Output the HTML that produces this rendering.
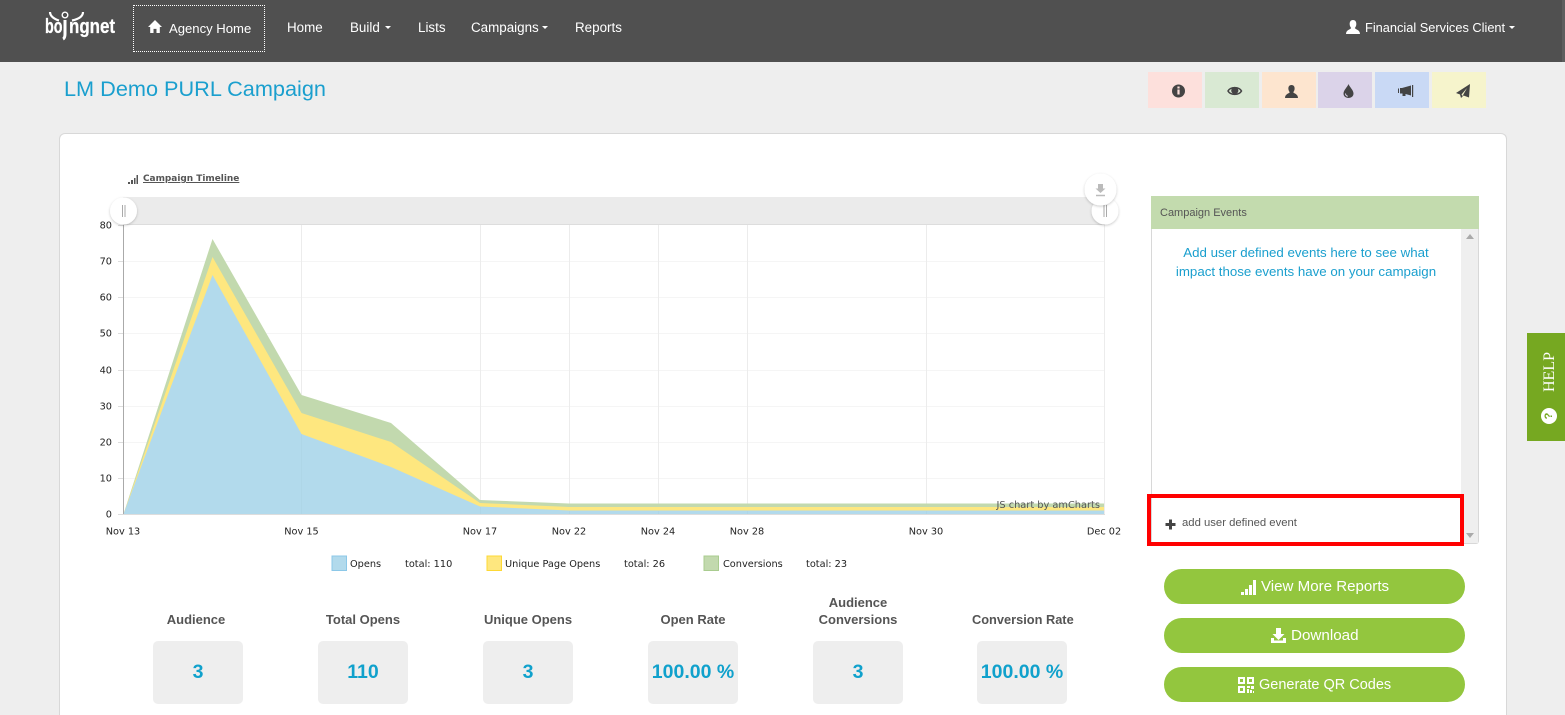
<!DOCTYPE html>
<html lang="en"><head><meta charset="utf-8"><title>LM Demo PURL Campaign</title>
<style>
html,body{margin:0;padding:0;width:1565px;height:715px;overflow:hidden;background:#eee;font-family:"Liberation Sans",sans-serif}
#p{position:relative;width:1565px;height:715px;overflow:hidden;background:#eee}
.a{position:absolute;white-space:nowrap}
.nav{color:#fff;font-size:13.4px;line-height:18px;top:19px}
.caret{position:absolute;width:0;height:0;border-left:3px solid transparent;border-right:3px solid transparent;border-top:3px solid #fff;top:26px}
.tile{position:absolute;top:72px;height:36px;width:54px}
.tile svg{position:absolute}
.lab{position:absolute;text-align:center;font-weight:700;font-size:13px;line-height:17px;color:#555;white-space:nowrap}
.stat{position:absolute;top:641px;width:90px;height:63px;background:#eee;border-radius:5px;text-align:center;font-weight:700;font-size:19.5px;line-height:62px;color:#10a1cc;white-space:nowrap}
.btn{position:absolute;left:1164px;width:301px;height:35px;border-radius:18px;background:#93c63e;color:#fff;line-height:38px}
.btn svg{position:absolute}
.btn span{position:absolute;white-space:nowrap;top:-1px;line-height:38px}
</style></head><body><div id="p">
<div class="a" style="left:0;top:0;width:1565px;height:62px;background:#505050"></div>
<div class="a" style="left:1562px;top:0;width:3px;height:62px;background:#5e5e5e"></div>

<!-- logo -->
<svg class="a" style="left:40px;top:8px" width="85" height="34" viewBox="0 0 85 34"><path d="M10 4C10 8 14 11 19 12.500M43 4C43 8 39 11 32 12.500" fill="none" stroke="#fff" stroke-width="2.200"/><circle cx="25" cy="7" r="2.800" fill="none" stroke="#fff" stroke-width="1.400"/><path d="M25 12V26Q25 30 23 31" fill="none" stroke="#fff" stroke-width="3"/><text x="5" y="25" font-family="Liberation Sans" font-weight="700" font-size="20" fill="#fff" stroke="#fff" stroke-width=".3" textLength="17.500" lengthAdjust="spacingAndGlyphs">bo</text><text x="29" y="25" font-family="Liberation Sans" font-weight="700" font-size="20" fill="#fff" stroke="#fff" stroke-width=".3" textLength="46" lengthAdjust="spacingAndGlyphs">ngnet</text></svg>

<div class="a" style="left:133px;top:5px;width:130px;height:45px;border:1px dotted #fff"></div>
<svg class="a" style="left:148px;top:20px" width="14" height="13" viewBox="0 0 16 14" preserveAspectRatio="none"><path d="M8 0L16 7.500H13.500V14H9.700V9.500H6.300V14H2.500V7.500H0Z" fill="#fff"/></svg>
<div class="a nav" style="left:169px;top:20px;font-size:13.1px">Agency Home</div>
<div class="a nav" style="left:287px">Home</div>
<div class="a nav" style="left:350px">Build</div><div class="caret" style="left:385px"></div>
<div class="a nav" style="left:418px">Lists</div>
<div class="a nav" style="left:471px">Campaigns</div><div class="caret" style="left:542px"></div>
<div class="a nav" style="left:575px">Reports</div>
<svg class="a" style="left:1346px;top:20px" width="14" height="14" viewBox="0 0 14 14"><path d="M7 0C9.500 0 10.500 2 10.300 4.500C10.200 6 9.500 7.300 8.800 8C9.500 9.500 14 9.800 14 14H0C0 9.800 4.500 9.500 5.200 8C4.500 7.300 3.800 6 3.700 4.500C3.500 2 4.500 0 7 0Z" fill="#fff"/></svg>
<div class="a nav" style="left:1365px;font-size:12.8px">Financial Services Client</div><div class="caret" style="left:1509px"></div>

<div class="a" style="left:64px;top:74px;font-size:21.7px;line-height:30px;color:#1a9fce">LM Demo PURL Campaign</div>

<div class="tile" style="left:1148px;background:#fde0dc"><svg style="left:20px;top:9px" width="20" height="20" viewBox="0 0 20 20"><circle cx="10.500" cy="10" r="6.500" fill="#444"/><rect x="9.400" y="8.500" width="2.200" height="5" fill="#fde0dc"/><rect x="9.400" y="5.500" width="2.200" height="2" fill="#fde0dc"/></svg></div>
<div class="tile" style="left:1205px;background:#d9e9d3"><svg style="left:20px;top:9px" width="20" height="20" viewBox="0 0 20 20"><path d="M3 10C5.500 5.500 14 5.500 16.500 10C14 14.500 5.500 14.500 3 10Z" fill="none" stroke="#444" stroke-width="1.500"/><circle cx="9.800" cy="9.500" r="3.600" fill="#444"/></svg></div>
<div class="tile" style="left:1262px;background:#fde5cf"><svg style="left:20px;top:10px" width="20" height="20" viewBox="0 0 20 20"><path d="M9.500 3C12 3 12.800 5 12.600 7C12.500 8.500 11.800 9.500 11.200 10.300C11.800 11.500 16 12 16 16H3C3 12 7.200 11.500 7.800 10.300C7.200 9.500 6.500 8.500 6.400 7C6.200 5 7 3 9.500 3Z" fill="#444"/></svg></div>
<div class="tile" style="left:1318px;background:#dbd3e9"><svg style="left:20px;top:10px" width="20" height="20" viewBox="0 0 20 20"><path d="M10.500 2C11.500 5 15.500 8 15.500 11.500C15.500 14.200 13.300 16 10.500 16C7.700 16 5.500 14.200 5.500 11.500C5.500 8 9.500 5 10.500 2Z" fill="#444"/><path d="M7.500 11.500C7.500 13 8.500 14 9.800 14.200" fill="none" stroke="#dbd3e9" stroke-width="1"/></svg></div>
<div class="tile" style="left:1375px;background:#c9d9f5"><svg style="left:15px;top:9px" width="26" height="20" viewBox="0 0 26 20"><path d="M8 7.500H9V12H8ZM10 7H12L21 4.500V14.500L15.500 13V15H12.500V12.500H10Z" fill="#444"/><rect x="22" y="4" width="1.200" height="12" fill="#444"/></svg></div>
<div class="tile" style="left:1432px;background:#f6f4cc"><svg style="left:14px;top:10px" width="26" height="20" viewBox="0 0 26 20"><path d="M24 2L10 11L14 12.500L15 16L17.500 13.500L23 15.500ZM15.500 12.500L21 6L16.500 14Z" fill="#444"/></svg></div>

<!-- card -->
<div class="a" style="left:59px;top:133px;width:1446px;height:582px;background:#fff;border:1px solid #d8d8d8;border-bottom:0;border-radius:6px 6px 0 0"></div>

<!-- chart title -->
<svg class="a" style="left:128px;top:175px" width="10" height="9" viewBox="0 0 10 9"><path d="M0 7h2v2H0zM3 5h2v4H3zM6 3h1.500v6H6zM8.500 0H10v9H8.500z" fill="#555"/></svg>
<div class="a" style="left:143px;top:172px;font-size:8.950px;line-height:14px;font-weight:700;color:#555;text-decoration:underline;font-family:'DejaVu Sans',sans-serif">Campaign Timeline</div>

<!-- chart -->
<svg class="a" style="left:90px;top:170px" width="1050" height="410" viewBox="90 170 1050 410" font-family="DejaVu Sans, sans-serif" font-size="9.750" fill="#222">
<defs><filter id="s" x="-30%" y="-30%" width="160%" height="160%"><feDropShadow dx="0" dy="1" stdDeviation="1.200" flood-color="#000" flood-opacity=".22"/></filter></defs>
<rect x="123" y="197" width="982" height="27.500" fill="#ebebeb"/>
<path d="M123 224.500H1105" stroke="#ddd"/>
<g stroke="#f5f5f5" stroke-width="1"><path d="M124 261.500H1105M124 297.500H1105M124 333.500H1105M124 370.500H1105M124 406.500H1105M124 442.500H1105M124 478.500H1105"/></g>
<g stroke="#ececec"><path d="M301.500 225V514M480.500 225V514M569.500 225V514M658.500 225V514M747.500 225V514M926.500 225V514M1104.500 225V514"/></g>
<path d="M123.500 514L212.500 239L301.500 395L391 423L480 500L569 503.500L658 503.500L747 503.500L836 503.500L926 503.500L1015 503.500L1104 503.500V514Z" fill="#c2d9ae"/>
<path d="M123.500 514L212.500 257L301.500 413L391 442L480 503L569 507L658 507L747 507L836 507L926 507L1015 507L1104 507V514Z" fill="#fee77f"/>
<path d="M123.500 514L212.500 275L301.500 434L391 467L480 506.500L569 510.500L658 510.500L747 510.500L836 510.500L926 510.500L1015 510.500L1104 510.500V514Z" fill="#b2daec"/>
<g stroke="#a9cfe0" opacity=".35"><path d="M301.500 434V514M480.500 507V514M569.500 511V514M658.500 511V514M747.500 511V514M926.500 511V514"/></g>
<path d="M123.500 225V514" stroke="#aaa"/><path d="M118 514.500H1105" stroke="#ddd"/>
<g stroke="#ddd"><path d="M118 225.500H123M118 261.500H123M118 297.500H123M118 333.500H123M118 370.500H123M118 406.500H123M118 442.500H123M118 478.500H123"/></g>
<g text-anchor="end"><text x="112" y="228.500">80</text><text x="112" y="264.500">70</text><text x="112" y="300.500">60</text><text x="112" y="336.500">50</text><text x="112" y="373.500">40</text><text x="112" y="409.500">30</text><text x="112" y="445.500">20</text><text x="112" y="481.500">10</text><text x="112" y="517.500">0</text></g>
<g text-anchor="middle"><text x="123" y="534.500">Nov 13</text><text x="301.500" y="534.500">Nov 15</text><text x="480" y="534.500">Nov 17</text><text x="569" y="534.500">Nov 22</text><text x="658" y="534.500">Nov 24</text><text x="747" y="534.500">Nov 28</text><text x="926" y="534.500">Nov 30</text><text x="1104" y="534.500">Dec 02</text></g>
<text x="1100" y="508" text-anchor="end" fill="#555" font-size="9.800">JS chart by amCharts</text>
<circle cx="123.500" cy="211" r="13.500" fill="#fff" filter="url(#s)"/><path d="M122.500 205V217M125 205V217" stroke="#aaa"/>
<circle cx="1105" cy="211" r="13.500" fill="#fff" filter="url(#s)"/><path d="M1104 205V217M1106.500 205V217" stroke="#aaa"/>
<circle cx="1100.500" cy="189.500" r="16" fill="#fff" filter="url(#s)"/><path d="M1098 184H1103V188.500H1105.500L1100.500 193L1095.500 188.500H1098Z" fill="#bbb"/><path d="M1096 195.500H1105" stroke="#bbb" stroke-width="1.500"/>
<rect x="332" y="556" width="14.500" height="14.500" fill="#b2daec" stroke="#8cc8e8"/>
<text x="350" y="567">Opens</text><text x="405" y="567">total: 110</text>
<rect x="487" y="556" width="14.500" height="14.500" fill="#fee77f" stroke="#fdd835"/>
<text x="505" y="567">Unique Page Opens</text><text x="624" y="567">total: 26</text>
<rect x="704" y="556" width="14.500" height="14.500" fill="#c2d9ae" stroke="#a9cc8f"/>
<text x="723" y="567">Conversions</text><text x="806" y="567">total: 23</text>
</svg>

<!-- stats -->
<div class="lab" style="left:146px;width:100px;top:611px">Audience</div>
<div class="lab" style="left:313px;width:100px;top:611px">Total Opens</div>
<div class="lab" style="left:478px;width:100px;top:611px">Unique Opens</div>
<div class="lab" style="left:643px;width:100px;top:611px">Open Rate</div>
<div class="lab" style="left:808px;width:100px;top:594px">Audience<br>Conversions</div>
<div class="lab" style="left:972px;width:100px;top:611px;font-size:12.8px">Conversion Rate</div>
<div class="stat" style="left:153px">3</div>
<div class="stat" style="left:318px">110</div>
<div class="stat" style="left:483px">3</div>
<div class="stat" style="left:648px">100.00 %</div>
<div class="stat" style="left:813px">3</div>
<div class="stat" style="left:977px">100.00 %</div>

<!-- events -->
<div class="a" style="left:1151px;top:196px;width:326px;height:347px;background:#fff;border:1px solid #d8d8d8;border-top:0;border-radius:0 0 3px 3px"></div>
<div class="a" style="left:1151px;top:196px;width:328px;height:33px;background:#c3dbae"></div>
<div class="a" style="left:1160px;top:206px;font-size:11px;line-height:14px;color:#555">Campaign Events</div>
<div class="a" style="left:1461px;top:229px;width:17px;height:314px;background:#efefef"></div>
<div class="a" style="left:1466px;top:234px;width:0;height:0;border-left:4px solid transparent;border-right:4px solid transparent;border-bottom:5px solid #aaa"></div>
<div class="a" style="left:1466px;top:533px;width:0;height:0;border-left:4px solid transparent;border-right:4px solid transparent;border-top:5px solid #aaa"></div>
<div class="a" style="left:1151px;top:243px;width:310px;text-align:center;font-size:13.3px;line-height:19px;color:#1a9fce">Add user defined events here to see what<br>impact those events have on your campaign</div>
<div class="a" style="left:1147px;top:494px;width:309px;height:44px;border:4px solid #f00"></div>
<svg class="a" style="left:1165px;top:519px" width="11" height="11" viewBox="0 0 11 11"><path d="M4 0.500H7V4H10.500V7H7V10.500H4V7H0.500V4H4Z" fill="#444"/></svg>
<div class="a" style="left:1182px;top:516px;font-size:11.3px;line-height:14px;color:#555">add user defined event</div>

<!-- buttons -->
<div class="btn" style="top:569px"><svg style="left:77px;top:11px" width="15" height="15" viewBox="0 0 15 15"><path d="M0 12h3v3H0zM4 9h3v6H4zM8 5h3v10H8zM12 0h3v15h-3z" fill="#fff"/></svg><span style="left:97px;font-size:15.1px">View More Reports</span></div>
<div class="btn" style="top:618px"><svg style="left:107px;top:10px" width="15" height="15" viewBox="0 0 15 15"><path d="M5 0H10V6H13.500L7.500 12L1.500 6H5Z" fill="#fff"/><path d="M0 10H3V12.500H12V10H15V15H0Z" fill="#fff"/></svg><span style="left:127px;font-size:15.2px">Download</span></div>
<div class="btn" style="top:667px"><svg style="left:74px;top:10px" width="16" height="16" viewBox="0 0 16 16"><path fill="#fff" fill-rule="evenodd" d="M0 0h7v7H0zM2 2v3h3V2zM9 0h7v7H9zM11 2v3h3V2zM0 9h7v7H0zM2 11v3h3v-3zM9 9h3v2H9zM13 9h3v3h-3zM9 12h2v4H9zM12 13h2v3h-2zM15 14h1v2h-1z"/></svg><span style="left:95px;font-size:14.5px">Generate QR Codes</span></div>

<!-- help -->
<div class="a" style="left:1527px;top:333px;width:38px;height:108px;background:#76a821"></div>
<div class="a" style="left:1530px;top:352px;width:40px;height:40px;display:flex;align-items:center;justify-content:center"><span style="transform:rotate(-90deg);font-family:'Liberation Serif',serif;font-size:16px;color:#fff;display:block">HELP</span></div>
<svg class="a" style="left:1541px;top:408px" width="16" height="16" viewBox="0 0 16 16"><circle cx="8" cy="8" r="8" fill="#fff"/><text x="8" y="8" transform="rotate(-90 8 8)" text-anchor="middle" dominant-baseline="central" font-family="Liberation Sans" font-weight="700" font-size="11" fill="#76a821">?</text></svg>
</div></body></html>
